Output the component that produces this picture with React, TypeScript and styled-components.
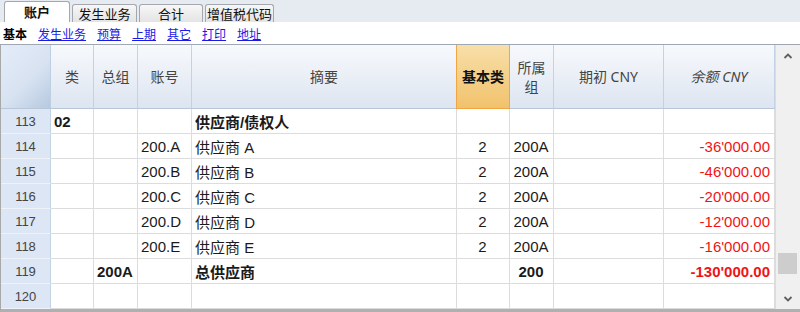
import React from "react";
import styled, { createGlobalStyle, css } from "styled-components";

const Global = createGlobalStyle`
  html, body { margin: 0; padding: 0; background: #ffffff; }
  body { width: 800px; height: 312px; overflow: hidden; font-family: "Liberation Sans", "Noto Sans CJK SC", sans-serif; }
`;

const COLS = "50px 43px 44px 54px 265px 53px 44px 110px 111px";

const Page = styled.div`
  width: 800px;
  height: 312px;
  display: flex;
  flex-direction: column;
`;

const TabBar = styled.div`
  height: 22px;
  background: #e6ebf2;
  display: flex;
  align-items: flex-end;
  gap: 2px;
  padding-left: 4px;
  box-sizing: border-box;
`;

const Tab = styled.div<{ $active?: boolean; $w: number }>`
  box-sizing: border-box;
  width: ${(p) => p.$w}px;
  height: ${(p) => (p.$active ? 21 : 18)}px;
  border: 1px solid #a4a8ae;
  border-bottom: none;
  border-radius: 3px 3px 0 0;
  display: flex;
  align-items: center;
  justify-content: center;
  white-space: nowrap;
  font-family: "Noto Sans CJK SC", sans-serif;
  font-size: 13px;
  color: #111;
  ${(p) =>
    p.$active
      ? css`
          background: #ffffff;
          font-weight: bold;
          padding-bottom: 2px;
        `
      : css`
          background: linear-gradient(#f7f7f7, #e4e4e4);
        `}
`;

const SubNav = styled.div`
  height: 22px;
  display: flex;
  align-items: center;
  gap: 11px;
  padding-left: 3px;
  font-family: "Noto Sans CJK SC", sans-serif;
  font-size: 12px;
  background: #ffffff;
  white-space: nowrap;
`;

const NavCurrent = styled.span`
  color: #000;
  font-weight: bold;
`;

const NavLink = styled.a`
  color: #1a1ae6;
  text-decoration: underline;
  cursor: pointer;
`;

const Frame = styled.div`
  box-sizing: border-box;
  height: 268px;
  border-top: 1px solid #9ea7b3;
  border-bottom: 3px solid #b0b0b0;
  border-left: 1px solid #a8a8a8;
  display: flex;
  overflow: hidden;
`;

const Table = styled.div`
  width: 774px;
  display: flex;
  flex-direction: column;
`;

const HeaderRow = styled.div`
  display: grid;
  grid-template-columns: ${COLS};
  height: 66px;
`;

const HeadCell = styled.div<{ $kind?: "corner" | "accent" | "normal"; $italic?: boolean }>`
  box-sizing: border-box;
  display: flex;
  align-items: center;
  justify-content: center;
  text-align: center;
  font-family: "Noto Sans", "Noto Sans CJK SC", sans-serif;
  font-size: 14px;
  line-height: 19px;
  color: #444;
  border-bottom: 1px solid #b7c6d9;
  border-right: 1px solid #c3d2e4;
  font-style: ${(p) => (p.$italic ? "italic" : "normal")};
  background: linear-gradient(#f7f9fc, #dde5f1);
  ${(p) =>
    p.$kind === "corner" &&
    css`
      background: linear-gradient(135deg, #e4ecf8 0%, #d8e3f2 55%, #b6c9df 100%);
      border-right: 1px solid #bfcfe3;
    `}
  ${(p) =>
    p.$kind === "accent" &&
    css`
      background: linear-gradient(#f8dfa9, #f1c26c);
      border-right: 1px solid #f0a743;
      border-left: 1px solid #f0a743;
      border-bottom: 1px solid #f0a743;
      color: #111;
      font-family: "Noto Sans CJK SC", sans-serif;
      font-weight: bold;
      margin-left: -1px;
    `}
`;

const Row = styled.div`
  display: grid;
  grid-template-columns: ${COLS};
  height: 25px;
  flex-shrink: 0;
`;

const Cell = styled.div<{ $align?: "left" | "center" | "right"; $bold?: boolean; $red?: boolean }>`
  box-sizing: border-box;
  height: 25px;
  display: flex;
  align-items: center;
  justify-content: ${(p) =>
    p.$align === "right" ? "flex-end" : p.$align === "center" ? "center" : "flex-start"};
  padding: 1px 4px 0 3px;
  border-right: 1px solid #dcdcdc;
  border-bottom: 1px solid #dcdcdc;
  font-family: "Liberation Sans", "Noto Sans CJK SC", sans-serif;
  font-size: 15px;
  white-space: nowrap;
  color: ${(p) => (p.$red ? "#f01414" : "#1a1a1a")};
  font-weight: ${(p) => (p.$bold ? "bold" : "normal")};
`;

const RowNum = styled.div`
  box-sizing: border-box;
  height: 25px;
  display: flex;
  align-items: center;
  justify-content: center;
  padding-top: 1px;
  background: #dce6f4;
  border-right: 1px solid #c3d2e5;
  border-bottom: 1px solid #eef3fa;
  font-family: "Liberation Sans", sans-serif;
  font-size: 13px;
  color: #444;
`;

const Scrollbar = styled.div`
  position: relative;
  width: 25px;
  background: #f0f0f0;
  border-left: 1px solid #d4deeb;
  box-sizing: border-box;
  display: flex;
  flex-direction: column;
  justify-content: space-between;
  align-items: center;
  padding: 7px 0 6px;
`;

const Thumb = styled.div`
  position: absolute;
  left: 2px;
  width: 19px;
  top: 208px;
  height: 21px;
  background: #cdcdcd;
`;

const Chevron = ({ up }: { up?: boolean }) => (
  <svg width="10" height="8" viewBox="0 0 10 8">
    <path
      d={up ? "M1.5 6 L5 2.5 L8.5 6" : "M1.5 2 L5 5.5 L8.5 2"}
      fill="none"
      stroke="#606060"
      strokeWidth="1.8"
    />
  </svg>
);

type RowData = {
  n: number;
  cls?: string;
  grp?: string;
  acc?: string;
  desc?: string;
  bclass?: string;
  sgroup?: string;
  open?: string;
  bal?: string;
  bold?: boolean;
};

const rows: RowData[] = [
  { n: 113, cls: "02", desc: "供应商/债权人", bold: true },
  { n: 114, acc: "200.A", desc: "供应商 A", bclass: "2", sgroup: "200A", bal: "-36'000.00" },
  { n: 115, acc: "200.B", desc: "供应商 B", bclass: "2", sgroup: "200A", bal: "-46'000.00" },
  { n: 116, acc: "200.C", desc: "供应商 C", bclass: "2", sgroup: "200A", bal: "-20'000.00" },
  { n: 117, acc: "200.D", desc: "供应商 D", bclass: "2", sgroup: "200A", bal: "-12'000.00" },
  { n: 118, acc: "200.E", desc: "供应商 E", bclass: "2", sgroup: "200A", bal: "-16'000.00" },
  { n: 119, grp: "200A", desc: "总供应商", sgroup: "200", bal: "-130'000.00", bold: true },
  { n: 120 },
];

const tabs = [
  { label: "账户", w: 66 },
  { label: "发生业务", w: 65 },
  { label: "合计", w: 64 },
  { label: "增值税代码", w: 69 },
];
const links = ["发生业务", "预算", "上期", "其它", "打印", "地址"];

export default function App() {
  return (
    <Page>
      <Global />
      <TabBar>
        {tabs.map((t, i) => (
          <Tab key={t.label} $active={i === 0} $w={t.w}>
            {t.label}
          </Tab>
        ))}
      </TabBar>
      <SubNav>
        <NavCurrent>基本</NavCurrent>
        {links.map((l) => (
          <NavLink key={l}>{l}</NavLink>
        ))}
      </SubNav>
      <Frame>
        <Table>
          <HeaderRow>
            <HeadCell $kind="corner" />
            <HeadCell>类</HeadCell>
            <HeadCell>总组</HeadCell>
            <HeadCell>账号</HeadCell>
            <HeadCell>摘要</HeadCell>
            <HeadCell $kind="accent">基本类</HeadCell>
            <HeadCell>
              所属
              <br />
              组
            </HeadCell>
            <HeadCell>期初 CNY</HeadCell>
            <HeadCell $italic>余额 CNY</HeadCell>
          </HeaderRow>
          {rows.map((r) => (
            <Row key={r.n}>
              <RowNum>{r.n}</RowNum>
              <Cell $bold={r.bold}>{r.cls}</Cell>
              <Cell $bold={r.bold}>{r.grp}</Cell>
              <Cell>{r.acc}</Cell>
              <Cell $bold={r.bold}>{r.desc}</Cell>
              <Cell $align="center">{r.bclass}</Cell>
              <Cell $align="center" $bold={r.bold}>
                {r.sgroup}
              </Cell>
              <Cell $align="right">{r.open}</Cell>
              <Cell $align="right" $red $bold={r.bold}>
                {r.bal}
              </Cell>
            </Row>
          ))}
        </Table>
        <Scrollbar>
          <Chevron up />
          <Thumb />
          <Chevron />
        </Scrollbar>
      </Frame>
    </Page>
  );
}
